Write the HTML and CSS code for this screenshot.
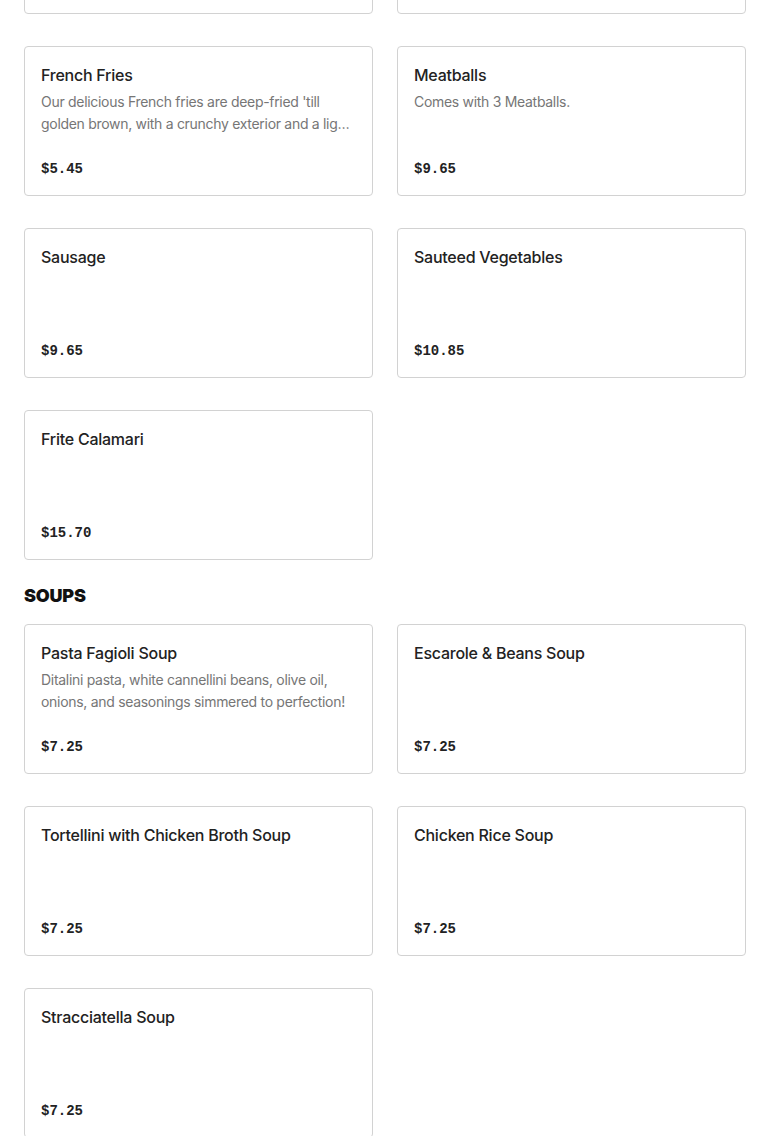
FILE: index.html
```html
<!DOCTYPE html>
<html lang="en">
<head>
  <meta charset="UTF-8">
  <meta name="viewport" content="width=device-width, initial-scale=1.0">
  <title>Menu</title>
  <link rel="stylesheet" href="styles.css">
</head>
<body>
  <main class="menu">
    <!-- Sides (page is scrolled, first row only shows its bottom edge) -->
    <section class="menu-section menu-section--scrolled">
      <div class="item-grid">
        <div class="item-card"></div>
        <div class="item-card"></div>
        <div class="item-card">
          <h3 class="item-name">French Fries</h3>
          <p class="item-desc">Our delicious French fries are deep-fried 'till golden brown, with a crunchy exterior and a light fluffy interior.</p>
          <div class="item-price">$5.45</div>
        </div>
        <div class="item-card">
          <h3 class="item-name">Meatballs</h3>
          <p class="item-desc">Comes with 3 Meatballs.</p>
          <div class="item-price">$9.65</div>
        </div>
        <div class="item-card">
          <h3 class="item-name">Sausage</h3>
          <p class="item-desc"></p>
          <div class="item-price">$9.65</div>
        </div>
        <div class="item-card">
          <h3 class="item-name">Sauteed Vegetables</h3>
          <p class="item-desc"></p>
          <div class="item-price">$10.85</div>
        </div>
        <div class="item-card">
          <h3 class="item-name">Frite Calamari</h3>
          <p class="item-desc"></p>
          <div class="item-price">$15.70</div>
        </div>
      </div>
    </section>

    <!-- Soups -->
    <section class="menu-section">
      <h2 class="section-title">SOUPS</h2>
      <div class="item-grid">
        <div class="item-card">
          <h3 class="item-name">Pasta Fagioli Soup</h3>
          <p class="item-desc">Ditalini pasta, white cannellini beans, olive oil, onions, and seasonings simmered to perfection!</p>
          <div class="item-price">$7.25</div>
        </div>
        <div class="item-card">
          <h3 class="item-name">Escarole &amp; Beans Soup</h3>
          <p class="item-desc"></p>
          <div class="item-price">$7.25</div>
        </div>
        <div class="item-card">
          <h3 class="item-name">Tortellini with Chicken Broth Soup</h3>
          <p class="item-desc"></p>
          <div class="item-price">$7.25</div>
        </div>
        <div class="item-card">
          <h3 class="item-name">Chicken Rice Soup</h3>
          <p class="item-desc"></p>
          <div class="item-price">$7.25</div>
        </div>
        <div class="item-card">
          <h3 class="item-name">Stracciatella Soup</h3>
          <p class="item-desc"></p>
          <div class="item-price">$7.25</div>
        </div>
      </div>
    </section>
  </main>
</body>
</html>
```

FILE: styles.css
```css
* {
    margin: 0;
    padding: 0;
    box-sizing: border-box;
}

body {
    background-color: #fff;
    font-family: Inter, "Liberation Sans", sans-serif;
    color: #222;
}

.menu {
    padding: 0 24px;
}

/* page is scrolled: first row of cards sits above the top edge */
.menu-section--scrolled {
    margin-top: -136px;
}

.menu-section + .menu-section {
    margin-top: 24px;
}

.section-title {
    font-size: 18px;
    font-weight: 900;
    line-height: 24px;
    letter-spacing: -0.2px;
    color: #111;
    margin-bottom: 16px;
}

.item-grid {
    display: grid;
    grid-template-columns: 1fr 1fr;
    gap: 32px 24px;
}

.item-card {
    display: flex;
    flex-direction: column;
    height: 150px;
    padding: 16px;
    border: 1px solid #d2d2d2;
    border-radius: 4px;
    background-color: #fff;
}

.item-name {
    font-size: 16px;
    font-weight: 500;
    line-height: 24px;
    letter-spacing: -0.25px;
    color: #222;
}

.item-desc {
    margin-top: 4px;
    font-size: 14px;
    line-height: 22px;
    letter-spacing: -0.3px;
    color: #767676;
    display: -webkit-box;
    -webkit-line-clamp: 2;
    -webkit-box-orient: vertical;
    overflow: hidden;
}

.item-price {
    margin-top: auto;
    font-family: "Liberation Mono", "DejaVu Sans Mono", monospace;
    font-size: 14px;
    font-weight: bold;
    line-height: 20px;
    color: #222;
}
```
